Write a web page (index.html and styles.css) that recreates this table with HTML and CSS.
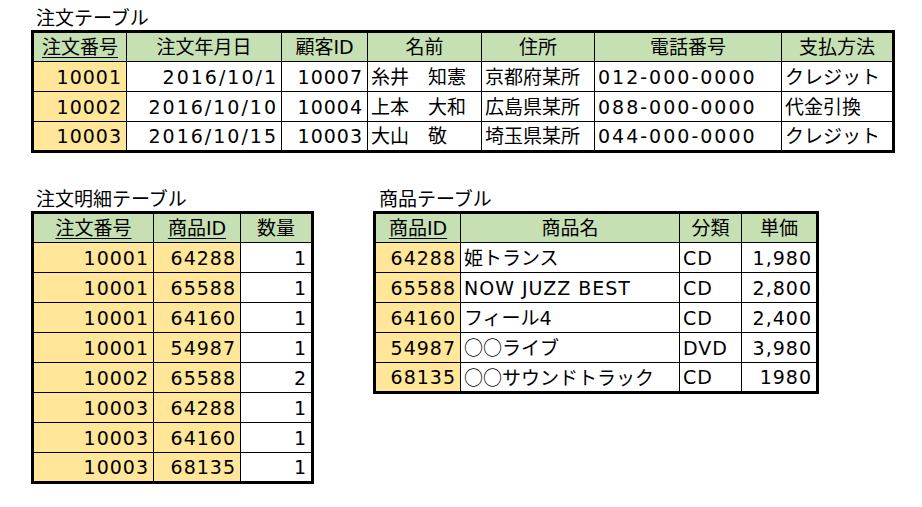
FILE: index.html
```html
<!DOCTYPE html>
<html lang="ja">
<head>
<meta charset="utf-8">
<title>テーブル</title>
<link rel="stylesheet" href="styles.css">
</head>
<body>
<div class="sheet">
  <div class="caption">注文テーブル</div>
  <table class="grid orders">
    <colgroup>
      <col class="o1"><col class="o2"><col class="o3"><col class="o4"><col class="o5"><col class="o6"><col class="o7">
    </colgroup>
    <thead>
      <tr><th class="key">注文番号</th><th>注文年月日</th><th>顧客ID</th><th>名前</th><th>住所</th><th>電話番号</th><th>支払方法</th></tr>
    </thead>
    <tbody>
      <tr><td class="pk num">10001</td><td class="num wide">2016/10/1</td><td class="num">10007</td><td>糸井　知憲</td><td>京都府某所</td><td class="wide">012-000-0000</td><td>クレジット</td></tr>
      <tr><td class="pk num">10002</td><td class="num wide">2016/10/10</td><td class="num">10004</td><td>上本　大和</td><td>広島県某所</td><td class="wide">088-000-0000</td><td>代金引換</td></tr>
      <tr><td class="pk num">10003</td><td class="num wide">2016/10/15</td><td class="num">10003</td><td>大山　敬</td><td>埼玉県某所</td><td class="wide">044-000-0000</td><td>クレジット</td></tr>
    </tbody>
  </table>

  <div class="lower">
    <div class="block">
      <div class="caption">注文明細テーブル</div>
      <table class="grid details">
        <colgroup><col class="d1"><col class="d2"><col class="d3"></colgroup>
        <thead>
          <tr><th class="key">注文番号</th><th class="key">商品ID</th><th>数量</th></tr>
        </thead>
        <tbody>
          <tr><td class="pk num">10001</td><td class="pk num">64288</td><td class="num">1</td></tr>
          <tr><td class="pk num">10001</td><td class="pk num">65588</td><td class="num">1</td></tr>
          <tr><td class="pk num">10001</td><td class="pk num">64160</td><td class="num">1</td></tr>
          <tr><td class="pk num">10001</td><td class="pk num">54987</td><td class="num">1</td></tr>
          <tr><td class="pk num">10002</td><td class="pk num">65588</td><td class="num">2</td></tr>
          <tr><td class="pk num">10003</td><td class="pk num">64288</td><td class="num">1</td></tr>
          <tr><td class="pk num">10003</td><td class="pk num">64160</td><td class="num">1</td></tr>
          <tr><td class="pk num">10003</td><td class="pk num">68135</td><td class="num">1</td></tr>
        </tbody>
      </table>
    </div>

    <div class="block">
      <div class="caption products-caption">商品テーブル</div>
      <table class="grid products">
        <colgroup><col class="p1"><col class="p2"><col class="p3"><col class="p4"></colgroup>
        <thead>
          <tr><th class="key">商品ID</th><th>商品名</th><th>分類</th><th>単価</th></tr>
        </thead>
        <tbody>
          <tr><td class="pk num">64288</td><td>姫トランス</td><td class="latin">CD</td><td class="num">1,980</td></tr>
          <tr><td class="pk num">65588</td><td class="latin">NOW JUZZ BEST</td><td class="latin">CD</td><td class="num">2,800</td></tr>
          <tr><td class="pk num">64160</td><td>フィール4</td><td class="latin">CD</td><td class="num">2,400</td></tr>
          <tr><td class="pk num">54987</td><td><span class="jp">○○</span>ライブ</td><td class="latin">DVD</td><td class="num">3,980</td></tr>
          <tr><td class="pk num">68135</td><td><span class="jp">○○</span>サウンドトラック</td><td class="latin">CD</td><td class="num">1980</td></tr>
        </tbody>
      </table>
    </div>
  </div>
</div>
</body>
</html>
```

FILE: styles.css
```css
* { box-sizing: border-box; }

html, body {
  margin: 0;
  background: #ffffff;
}

body {
  font-family: "DejaVu Sans", "Noto Sans CJK JP", sans-serif;
  font-size: 19px;
  color: #000000;
}

.sheet {
  padding-left: 31px;
}

.caption {
  height: 30px;
  padding: 6px 0 0 5px;
  line-height: 24px;
  white-space: nowrap;
}

.products-caption {
  padding-left: 6px;
}

.grid {
  border-collapse: collapse;
  table-layout: fixed;
  border: 3px solid #000;
}

.grid th,
.grid td {
  height: 30px;
  padding: 0 3px;
  border: 1px solid #000;
  white-space: nowrap;
  overflow: hidden;
  vertical-align: middle;
  line-height: 22px;
}

.grid th {
  background: #c6e0b4;
  font-weight: normal;
  text-align: center;
}

.grid th.key {
  text-decoration: underline;
  text-underline-offset: 3px;
  text-decoration-thickness: 1px;
}

.grid td {
  text-align: left;
}

.grid td.num {
  text-align: right;
  padding-right: 4px;
  letter-spacing: 1px;
}

.grid td.wide {
  letter-spacing: 2px;
}

.grid td.num.wide {
  padding-right: 3px;
}

.grid td.latin {
  letter-spacing: 1px;
}

.grid td.pk {
  background: #ffe699;
}

.jp {
  font-family: "Noto Sans CJK JP", sans-serif;
}

/* orders table */
.orders { width: 864px; }
.o1 { width: 94px; }
.o2 { width: 155px; }
.o3 { width: 86px; }
.o4 { width: 114px; }
.o5 { width: 113px; }
.o6 { width: 187px; }
.o7 { width: 112px; }

.lower {
  display: flex;
  align-items: flex-start;
  gap: 59px;
  margin-top: 28px;
}

/* details table */
.details { width: 283px; }
.d1 { width: 121px; }
.d2 { width: 87px; }
.d3 { width: 72px; }

/* products table */
.products { width: 446px; }
.p1 { width: 86px; }
.p2 { width: 219px; }
.p3 { width: 62px; }
.p4 { width: 76px; }
```
